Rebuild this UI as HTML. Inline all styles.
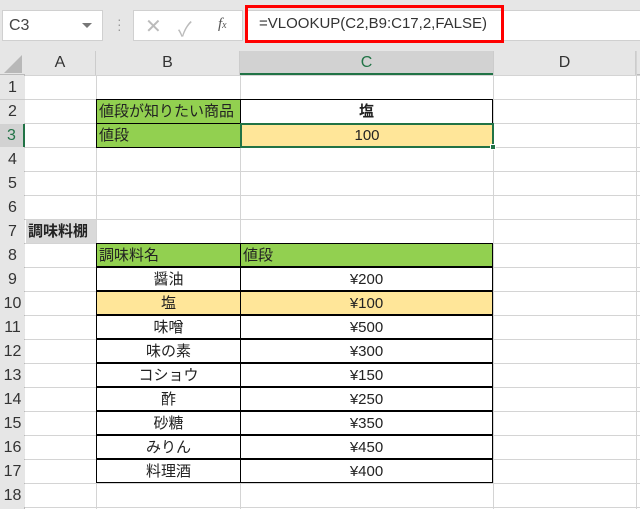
<!DOCTYPE html>
<html><head><meta charset="utf-8"><style>
*{margin:0;padding:0;box-sizing:border-box}
body{width:640px;height:509px;overflow:hidden;background:#fff;position:relative;font-family:"Liberation Sans","Noto Sans CJK JP",sans-serif;color:#222}
.a{position:absolute}
.tb{left:0;top:0;width:640px;height:51px;background:#e6e6e6}
.grid{left:25px;top:75px;width:615px;height:434px;background:repeating-linear-gradient(to bottom,#d4d4d4 0,#d4d4d4 1px,transparent 1px,transparent 24px)}
.v{width:1px;background:#d4d4d4;top:51px;height:458px}
.rh{left:0;width:25px;background:#e6e6e6;color:#333;font-size:16px;text-align:center;height:23px;line-height:24px}
.ch{top:51px;height:24px;background:#e6e6e6;font-size:16px;text-align:center;line-height:24px;color:#333}
.c{height:24px;line-height:24px;font-size:15px;border:1px solid #000;color:#222}
.ctr{text-align:center}
</style></head><body>
<div class="a tb"></div>
<div class="a" style="left:2px;top:10px;width:101px;height:31px;background:#fff;border:1px solid #d0d0d0;font-size:16px;line-height:29px;padding-left:6px;color:#444">C3<span class="a" style="right:10px;top:12px;width:0;height:0;border-left:5px solid transparent;border-right:5px solid transparent;border-top:5px solid #777"></span></div>
<div class="a" style="left:117px;top:17px;color:#999;font-size:14px;line-height:5px">·<br>·<br>·</div>
<div class="a" style="left:133px;top:10px;width:110px;height:31px;background:#fff;border:1px solid #d0d0d0"></div>
<div class="a" style="left:145px;top:14px;font-size:20px;color:#bbb">✕</div>
<div class="a" style="left:178px;top:13px;font-size:20px;color:#bbb">✓</div>
<div class="a" style="left:218px;top:16px;font-size:15px;color:#555;font-family:'Liberation Serif',serif;font-style:italic">f<span style="font-size:10px">x</span></div>
<div class="a" style="left:245px;top:10px;width:395px;height:31px;background:#fff;border-top:1px solid #d0d0d0;border-bottom:1px solid #d0d0d0"></div>
<div class="a" style="left:245px;top:5px;width:259px;height:38px;border:3px solid #f00;font-size:15px;line-height:32px;padding-left:11px;color:#333;white-space:nowrap">=VLOOKUP(C2,B9:C17,2,FALSE)</div>
<div class="a grid"></div>
<div class="a" style="left:0;top:51px;width:25px;height:458px;background:#e6e6e6;border-right:1px solid #bbb"></div>
<div class="a" style="left:0;top:51px;width:640px;height:24px;background:#e6e6e6;border-bottom:1px solid #bbb"></div>
<div class="a" style="left:4px;top:55px;width:0;height:0;border-left:18px solid transparent;border-bottom:18px solid #b8b8b8"></div>
<div class="a v" style="left:96px"></div><div class="a v" style="left:240px"></div><div class="a v" style="left:493px"></div><div class="a v" style="left:636px"></div>
<div class="a ch" style="left:25px;width:71px;border-right:1px solid #ccc">A</div>
<div class="a ch" style="left:96px;width:144px;border-right:1px solid #ccc">B</div>
<div class="a ch" style="left:240px;width:253px;background:#d2d2d2;border-bottom:2px solid #217346;color:#217346">C</div>
<div class="a ch" style="left:493px;width:143px;border-left:1px solid #ccc;border-right:1px solid #ccc">D</div>
<div class="a rh" style="top:76px">1</div><div class="a rh" style="top:100px">2</div><div class="a rh" style="top:124px;background:#d2d2d2;color:#217346;border-right:2px solid #217346">3</div><div class="a rh" style="top:148px">4</div><div class="a rh" style="top:172px">5</div><div class="a rh" style="top:196px">6</div><div class="a rh" style="top:220px">7</div><div class="a rh" style="top:244px">8</div><div class="a rh" style="top:268px">9</div><div class="a rh" style="top:292px">10</div><div class="a rh" style="top:316px">11</div><div class="a rh" style="top:340px">12</div><div class="a rh" style="top:364px">13</div><div class="a rh" style="top:388px">14</div><div class="a rh" style="top:412px">15</div><div class="a rh" style="top:436px">16</div><div class="a rh" style="top:460px">17</div><div class="a rh" style="top:484px">18</div>
<div class="a" style="left:0;top:99px;width:25px;height:1px;background:#ccc"></div>
<div class="a c" style="left:96px;top:99px;width:145px;height:25px;background:#92d050;padding-left:2px">値段が知りたい商品</div>
<div class="a c ctr" style="left:240px;top:99px;width:253px;height:25px;font-weight:bold">塩</div>
<div class="a c" style="left:96px;top:123px;width:145px;height:25px;background:#92d050;padding-left:2px">値段</div>
<div class="a c ctr" style="left:240px;top:123px;width:254px;height:25px;background:#ffe699;border:2px solid #217346;line-height:21px">100</div>
<div class="a" style="left:490px;top:144px;width:6px;height:6px;background:#217346;border:1px solid #fff"></div>
<div class="a" style="left:26px;top:220px;width:70px;height:23px;background:#d9d9d9;font-weight:bold;font-size:15px;line-height:23px;padding-left:2px">調味料棚</div>
<div class="a c" style="left:96px;top:243px;width:145px;background:#92d050;padding-left:2px">調味料名</div>
<div class="a c" style="left:240px;top:243px;width:253px;background:#92d050;padding-left:2px">値段</div>
<div class="a c ctr" style="left:96px;top:267px;width:145px">醤油</div><div class="a c ctr" style="left:240px;top:267px;width:253px">¥200</div>
<div class="a c ctr" style="left:96px;top:291px;width:145px;background:#ffe699">塩</div><div class="a c ctr" style="left:240px;top:291px;width:253px;background:#ffe699">¥100</div>
<div class="a c ctr" style="left:96px;top:315px;width:145px">味噌</div><div class="a c ctr" style="left:240px;top:315px;width:253px">¥500</div>
<div class="a c ctr" style="left:96px;top:339px;width:145px">味の素</div><div class="a c ctr" style="left:240px;top:339px;width:253px">¥300</div>
<div class="a c ctr" style="left:96px;top:363px;width:145px">コショウ</div><div class="a c ctr" style="left:240px;top:363px;width:253px">¥150</div>
<div class="a c ctr" style="left:96px;top:387px;width:145px">酢</div><div class="a c ctr" style="left:240px;top:387px;width:253px">¥250</div>
<div class="a c ctr" style="left:96px;top:411px;width:145px">砂糖</div><div class="a c ctr" style="left:240px;top:411px;width:253px">¥350</div>
<div class="a c ctr" style="left:96px;top:435px;width:145px">みりん</div><div class="a c ctr" style="left:240px;top:435px;width:253px">¥450</div>
<div class="a c ctr" style="left:96px;top:459px;width:145px">料理酒</div><div class="a c ctr" style="left:240px;top:459px;width:253px">¥400</div>
</body></html>
